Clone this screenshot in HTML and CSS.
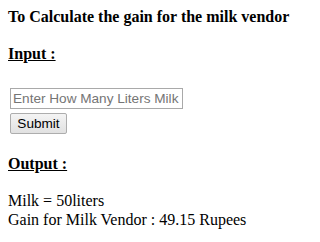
FILE: index.html
```html
<!DOCTYPE html>
<html>
<head>
<meta charset="utf-8">
<link rel="stylesheet" href="styles.css">
</head>
<body class="page">
<div class="title">To Calculate the gain for the milk vendor</div>
<div class="label">Input :</div>
<div class="form">
  <input class="field" type="text" placeholder="Enter How Many Liters Milk vendor sold">
  <button class="btn" type="button">Submit</button>
</div>
<div class="label out">Output :</div>
<div class="result">
  <div class="line">Milk = 50liters</div>
  <div class="line">Gain for Milk Vendor : 49.15 Rupees</div>
</div>
</body>
</html>
```
FILE: styles.css
```css
html, body { background: #fff; }
.page {
  margin: 8px;
  font-family: "Liberation Serif", "Times New Roman", serif;
  font-size: 16px;
  color: #000;
}
.title {
  font-weight: bold;
  line-height: 18px;
}
.label {
  font-weight: bold;
  text-decoration: underline;
  line-height: 18px;
  margin-top: 19px;
}
.form {
  display: flex;
  flex-direction: column;
  align-items: flex-start;
  gap: 4px;
  margin-top: 25px;
}
.field {
  box-sizing: border-box;
  width: 173px;
  height: 21px;
  margin: 0 0 0 2px;
  padding: 1px 2px;
  border: 1px solid #a9a9a9;
  font-family: "Liberation Sans", Arial, sans-serif;
  font-size: 13.6px;
  color: #000;
  outline: none;
}
.field::placeholder { color: #757575; }
.btn {
  box-sizing: border-box;
  width: 57px;
  height: 21px;
  margin: 0 0 0 2px;
  padding: 1px 6px;
  border: 1px solid #adadad;
  border-radius: 2px;
  background: linear-gradient(#f4f4f4, #e1e1e1);
  font-family: "Liberation Sans", Arial, sans-serif;
  font-size: 13.6px;
  color: #000;
}
.out { margin-top: 21px; }
.result { margin-top: 18px; }
.line { line-height: 19px; }
```
